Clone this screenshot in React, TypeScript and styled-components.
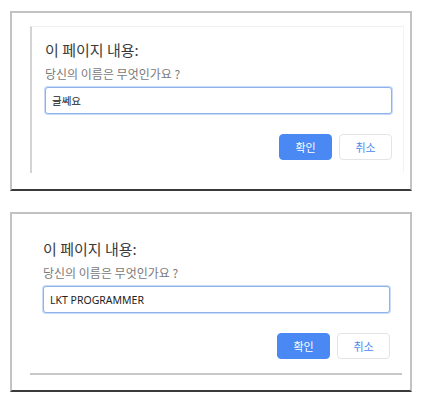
import React from "react";
import styled, { createGlobalStyle, css } from "styled-components";

const Global = createGlobalStyle`
  html, body { margin: 0; padding: 0; background: #ffffff; }
  body {
    font-family: "Noto Sans", "Noto Sans CJK KR", sans-serif;
    width: 426px;
    height: 402px;
    overflow: hidden;
  }
`;

const Page = styled.div`
  display: flex;
  flex-direction: column;
  gap: 21px;
  padding: 11px 0 0 10px;
`;

const Frame = styled.div<{ $inset: boolean }>`
  box-sizing: border-box;
  width: 402px;
  height: 180px;
  border: 2px solid #c2c2c2;
  border-bottom: 2px solid #3a3a3a;
  display: flex;
  flex-direction: column;
  ${(p) =>
    p.$inset
      ? css`
          padding: 13px 6px 16px 18px;
        `
      : css`
          padding: 0 8px 15px 18px;
        `}
`;

const Dialog = styled.div<{ $boxed: boolean }>`
  box-sizing: border-box;
  flex: 1;
  display: flex;
  flex-direction: column;
  ${(p) =>
    p.$boxed
      ? css`
          border-left: 2px solid #d4d4d4;
          border-top: 1px solid #f0f0f0;
          border-right: 1px solid #f3f3f3;
          padding: 13px 12px 0 13px;
        `
      : css`
          border-bottom: 2px solid #c8c8c8;
          padding: 25px 12px 0 13px;
        `}
`;

const Title = styled.div`
  font-family: "Noto Sans CJK KR", sans-serif;
  font-size: 15px;
  line-height: 20px;
  color: #3a3a3a;
  margin-bottom: 6px;
`;

const Question = styled.div`
  font-family: "Noto Sans CJK KR", sans-serif;
  font-size: 12px;
  line-height: 16px;
  color: #7a7a7a;
  margin-bottom: 5px;
`;

const Input = styled.input`
  box-sizing: border-box;
  width: 347px;
  height: 27px;
  border: 1px solid #8eb2ea;
  border-radius: 3px;
  box-shadow: 0 0 0 1px #c9dbf7;
  outline: none;
  padding: 0 6px;
  font-family: "Noto Sans", "Noto Sans CJK KR", sans-serif;
  font-size: 10.5px;
  color: #222222;
  background: #fff;
`;

const Actions = styled.div`
  display: flex;
  justify-content: flex-end;
  gap: 7px;
  margin-top: 20px;
  width: 347px;
`;

const Button = styled.button<{ $primary?: boolean }>`
  box-sizing: border-box;
  width: 53px;
  height: 26px;
  border-radius: 4px;
  font-family: "Noto Sans CJK KR", sans-serif;
  font-size: 11px;
  padding: 0;
  cursor: pointer;
  ${(p) =>
    p.$primary
      ? css`
          background: #4a89f3;
          border: 1px solid #4a89f3;
          color: #ffffff;
        `
      : css`
          background: #ffffff;
          border: 1px solid #e2e4e8;
          color: #4a89f3;
        `}
`;

function Prompt({ value, boxed }: { value: string; boxed: boolean }) {
  return (
    <Frame $inset={boxed}>
      <Dialog $boxed={boxed}>
        <Title>이 페이지 내용:</Title>
        <Question>당신의 이름은 무엇인가요 ?</Question>
        <Input defaultValue={value} />
        <Actions>
          <Button $primary>확인</Button>
          <Button>취소</Button>
        </Actions>
      </Dialog>
    </Frame>
  );
}

export default function App() {
  return (
    <>
      <Global />
      <Page>
        <Prompt value="글쎄요" boxed />
        <Prompt value="LKT PROGRAMMER" boxed={false} />
      </Page>
    </>
  );
}
